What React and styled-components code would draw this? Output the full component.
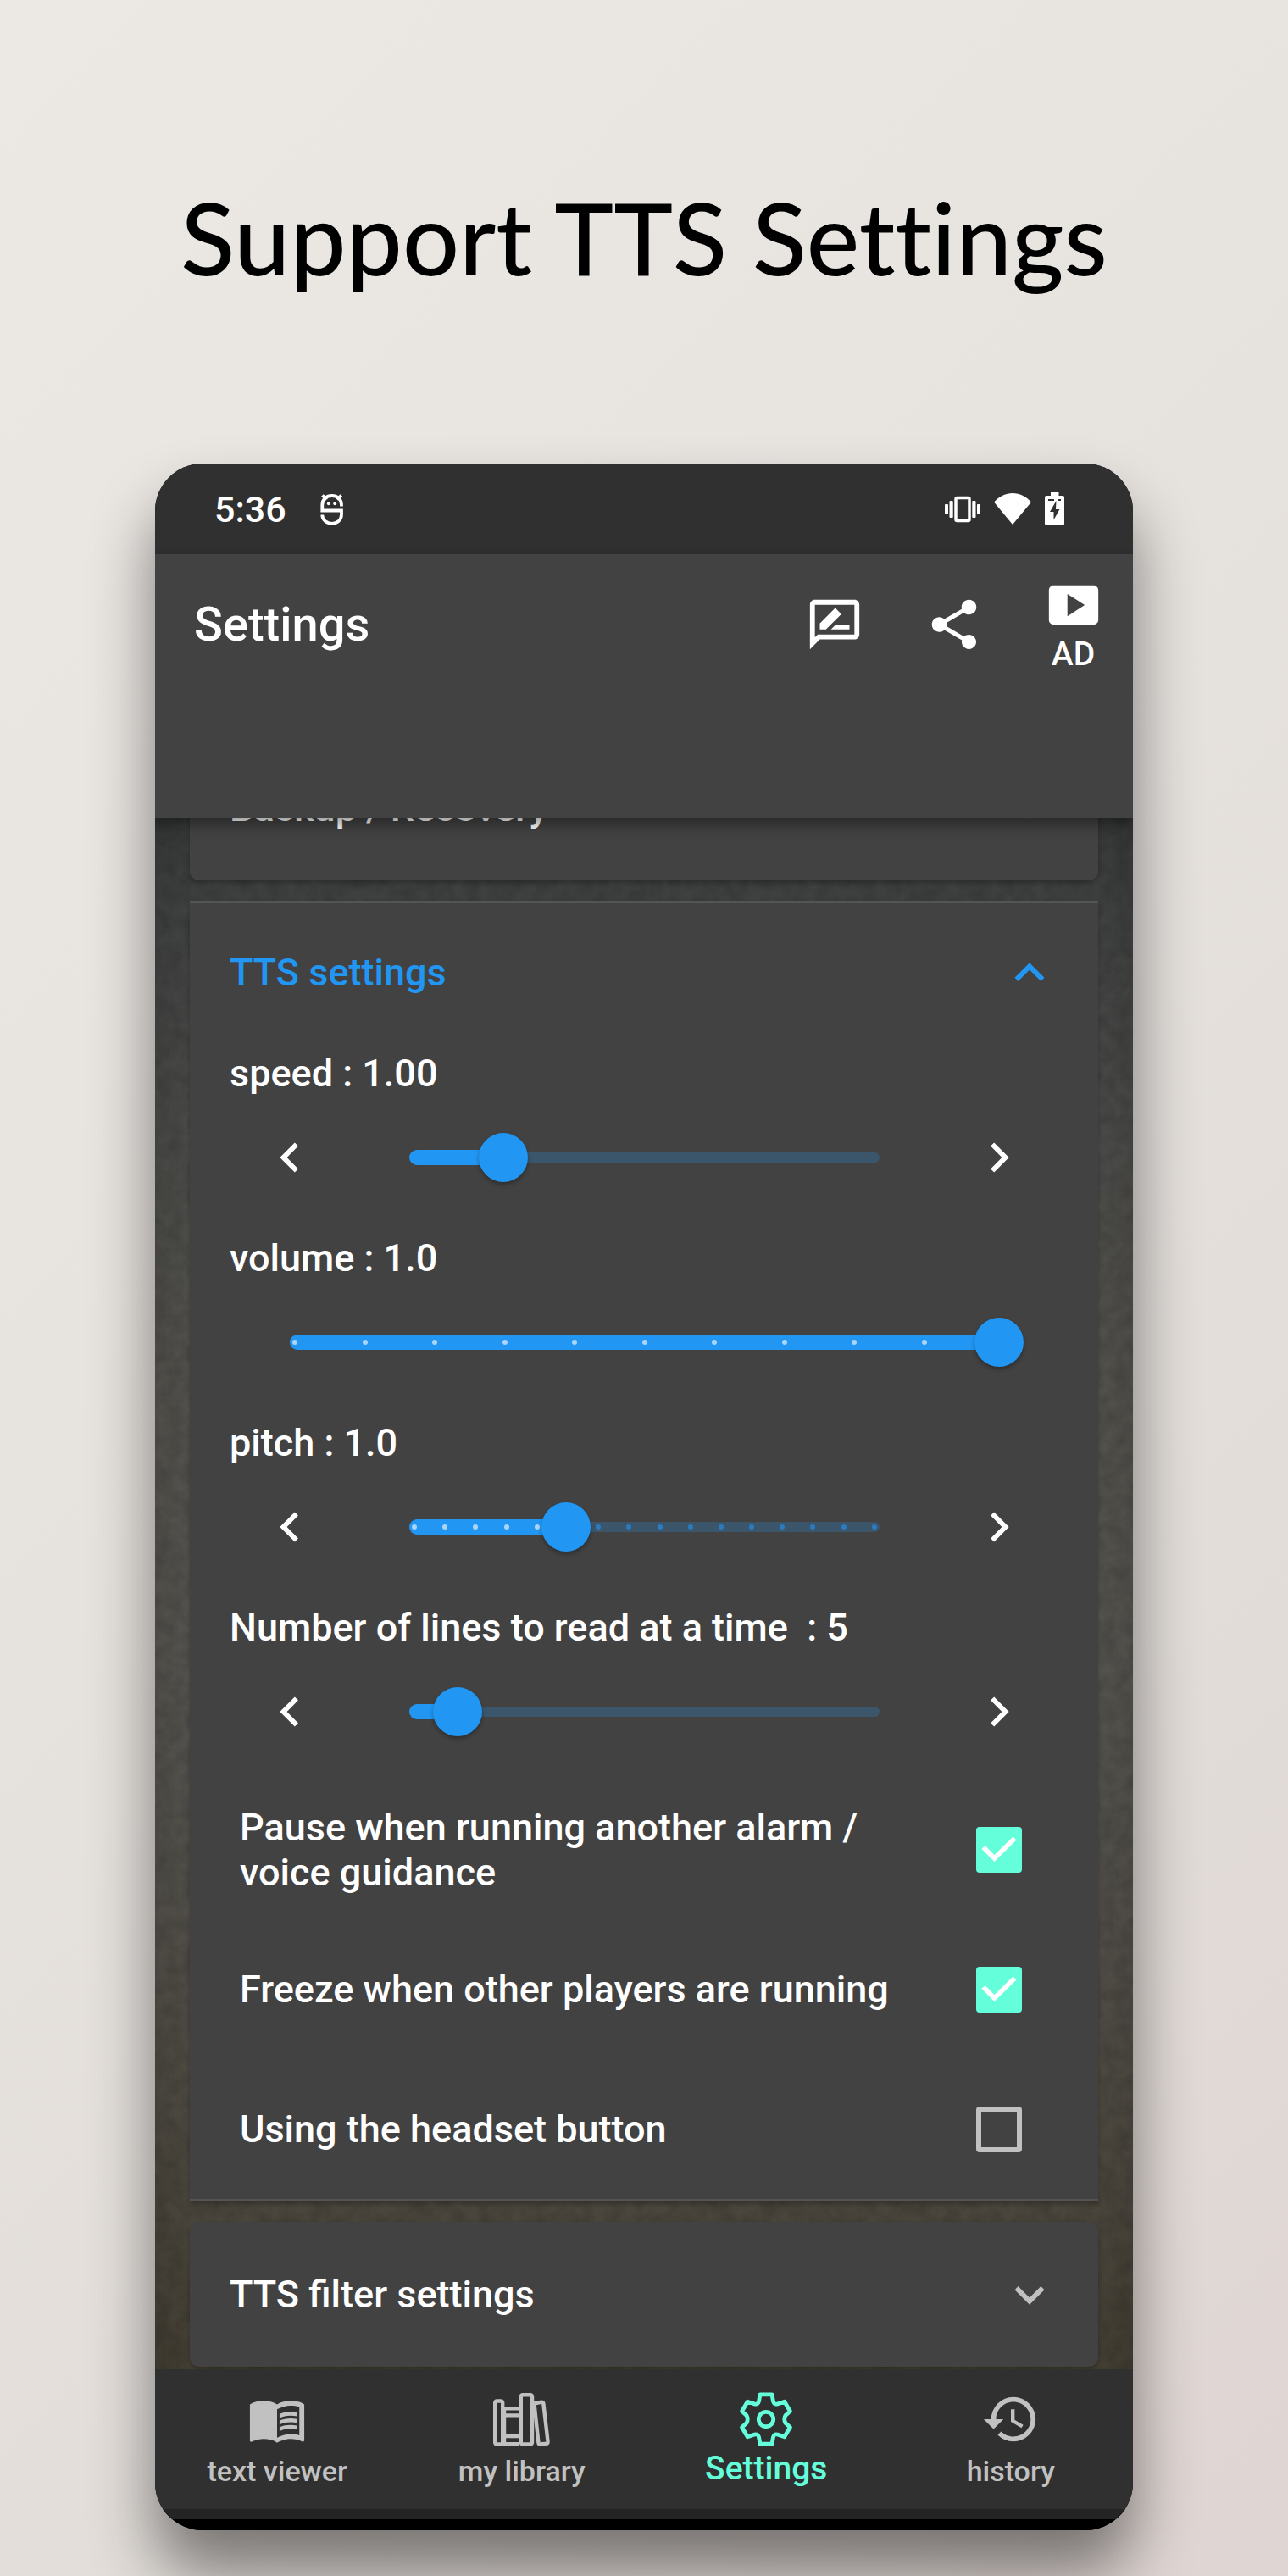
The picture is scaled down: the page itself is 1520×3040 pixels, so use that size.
import React, { useState } from "react";
import styled, { createGlobalStyle, css } from "styled-components";
import {
  MdChevronLeft,
  MdChevronRight,
  MdExpandLess,
  MdExpandMore,
  MdHistory,
  MdMenuBook,
  MdOutlineRateReview,
  MdShare,
} from "react-icons/md";

const color = {
  surface: "#424242",
  bar: "#303030",
  text: "#ffffff",
  muted: "#c1c1c1",
  blue: "#2196f3",
  track: "#3b556b",
  mint: "#64ffda",
};

const GlobalStyle = createGlobalStyle`
  *, *::before, *::after { box-sizing: border-box; }
  body { margin: 0; font-family: Roboto, "Liberation Sans", sans-serif; }
  button { font: inherit; color: inherit; background: none; border: 0; padding: 0; cursor: pointer; }
  a { color: inherit; text-decoration: none; }
  svg { display: block; flex: none; }
`;

const Page = styled.main`
  min-height: 100vh;
  padding: 200px 24px 54px;
  overflow: hidden;
  background: linear-gradient(135deg, #ece9e5 0%, #e7e3df 38%, #e2ddd9 72%, #dfd5d2 100%);
`;

const Title = styled.h1`
  margin: 0 0 187px;
  font-family: Lato, "Open Sans", sans-serif;
  font-size: 118px;
  line-height: 160px;
  font-weight: 500;
  font-variant-ligatures: none;
  text-align: center;
  color: #000;
`;

const Phone = styled.section`
  max-width: 1154px;
  margin: 0 auto;
  border-radius: 56px;
  overflow: hidden;
  background: #000;
  color: ${color.text};
  box-shadow: 0 50px 76px rgba(0, 0, 0, 0.47);
`;

const StatusBar = styled.div`
  display: flex;
  align-items: center;
  gap: 40px;
  height: 107px;
  padding: 0 81px 0 70px;
  background: ${color.bar};
  font-size: 43px;
  line-height: 48px;
  font-weight: 500;
`;

const StatusIcons = styled.div`
  display: flex;
  align-items: center;
  gap: 16px;
  margin-left: auto;
`;

const AppBar = styled.header`
  position: relative;
  z-index: 1;
  padding-bottom: 146px;
  background: ${color.surface};
  box-shadow: 0 8px 16px rgba(0, 0, 0, 0.4);
`;

const Toolbar = styled.div`
  display: flex;
  align-items: center;
  height: 165px;
  padding-left: 46px;
`;

const ScreenTitle = styled.h2`
  flex: 1;
  margin: 0;
  font-size: 56px;
  line-height: 66px;
  font-weight: 500;
`;

const IconButton = styled.button`
  display: flex;
  flex-direction: column;
  align-items: center;
  justify-content: center;
  flex: none;
  width: 141px;
  min-height: 141px;
  font-size: 39px;
  line-height: 46px;
  font-weight: 500;
`;

const Content = styled.div`
  position: relative;
  overflow: hidden;
  background:
    linear-gradient(90deg, rgba(0, 0, 0, 0.08), transparent 4%, transparent 96%, rgba(0, 0, 0, 0.08)),
    linear-gradient(
      180deg,
      #383a3a 0%,
      #404241 6%,
      #4b4b49 20%,
      #53524d 36%,
      #55544f 55%,
      #524f49 72%,
      #4b473e 88%,
      #443f34 100%
    );
`;

const Grain = styled.svg`
  position: absolute;
  inset: 0;
  width: 100%;
  height: 100%;
  opacity: 0.12;
`;

const CardList = styled.div`
  position: relative;
  display: flex;
  flex-direction: column;
  gap: 24px;
  margin-top: -97px;
  padding: 0 41px 3px;
`;

const Card = styled.section`
  border-radius: 11px;
  background: ${color.surface};
  box-shadow: 0 3px 5px rgba(0, 0, 0, 0.25);
  ${(p) =>
    p.$open &&
    css`
      border-radius: 0;
      border-top: 3px solid #535553;
      border-bottom: 3px solid #555453;
    `}
`;

const CardHeader = styled.button`
  display: flex;
  align-items: center;
  justify-content: space-between;
  width: 100%;
  height: ${(p) => (p.$open ? 152 : 171)}px;
  padding: ${(p) => (p.$open ? 11 : 0)}px 46px 0 47px;
  font-size: 45px;
  line-height: 53px;
  font-weight: 500;
  text-align: left;
  color: ${(p) => (p.$open ? color.blue : color.text)};

  svg {
    color: ${(p) => (p.$open ? color.blue : color.muted)};
  }
`;

const CardBody = styled.div`
  padding: 0 47px;
`;

const SettingLabel = styled.label`
  display: block;
  padding: 22px 0 2px;
  font-size: 45px;
  line-height: 53px;
  font-weight: 500;
  white-space: pre-wrap;
`;

const SliderRow = styled.div`
  display: flex;
  align-items: center;
  height: 141px;
`;

const SliderBox = styled.div`
  flex: 1;
  display: grid;
  align-items: center;
  padding: 0 70px 0 71px;

  & > * {
    grid-area: 1 / 1;
  }
`;

const Rail = styled.div`
  height: 12px;
  border-radius: 6px;
  background: ${color.track};
`;

const Fill = styled.div`
  height: 18px;
  border-radius: 9px 0 0 9px;
  background: ${color.blue};
`;

const Ticks = styled.div`
  display: flex;
  justify-content: space-between;
  padding: 0 3px;
`;

const Tick = styled.span`
  width: 6px;
  height: 6px;
  border-radius: 3px;
  background: ${(p) => (p.$on ? "#a9d5fa" : "#2b7bc0")};
`;

const thumb = css`
  width: 58px;
  height: 58px;
  border: 0;
  border-radius: 50%;
  background: ${color.blue};
  box-shadow: 0 3px 5px rgba(0, 0, 0, 0.3);
`;

const Range = styled.input`
  appearance: none;
  width: calc(100% + 58px);
  height: 58px;
  margin: 0 -29px;
  background: transparent;
  cursor: pointer;

  &::-webkit-slider-thumb {
    appearance: none;
    ${thumb}
  }
  &::-moz-range-thumb {
    ${thumb}
  }
`;

const CheckList = styled.div`
  padding-top: 10px;
`;

const CheckRow = styled.label`
  display: flex;
  align-items: center;
  height: 165px;
  padding-left: 12px;
  font-size: 45px;
  line-height: 53px;
  font-weight: 500;
  cursor: pointer;
`;

const CheckText = styled.span`
  flex: 1;
`;

const CheckBox = styled.span`
  display: grid;
  place-items: center;
  width: 140px;

  & > * {
    grid-area: 1 / 1;
  }
  svg {
    pointer-events: none;
  }
`;

const CheckInput = styled.input`
  appearance: none;
  width: 54px;
  height: 54px;
  margin: 0;
  border: 6px solid ${color.muted};
  border-radius: 4px;

  &:checked {
    border-color: ${color.mint};
    background: ${color.mint};
  }
`;

const Nav = styled.nav`
  display: flex;
  height: 165px;
  padding-top: 24px;
  background: ${color.bar};
`;

const NavItem = styled.a`
  flex: 1;
  display: flex;
  flex-direction: column;
  align-items: center;
  color: ${(p) => (p.$active ? color.mint : color.muted)};
`;

const NavIcon = styled.span`
  display: grid;
  place-items: center;
  height: 70px;
`;

const NavLabel = styled.span`
  display: flex;
  align-items: flex-end;
  height: 46px;
  font-size: ${(p) => (p.$active ? 39 : 34)}px;
  line-height: ${(p) => (p.$active ? 46 : 40)}px;
  font-weight: 500;
`;

const GestureArea = styled.div`
  height: 25px;
  border-top: 12px solid #242424;
  background: #000;
`;

const HeadIcon = () => (
  <svg width="28" height="38" viewBox="0 0 28 38" fill="none" stroke="#fff" strokeWidth="3.8" aria-hidden="true">
    <path d="M25 15.5V14C25 7 20 3 13.7 3S2.3 7 2.3 14v6.5H25V25c0 6.500-5 10.800-11.300 10.800S2.300 31.500 2.300 25.500" />
    <path d="M2.500 2.500l5 5M24.800 2.500l-5 5" />
    <circle cx="9.800" cy="12.300" r="1.900" fill="#fff" stroke="none" />
    <circle cx="17.200" cy="12.300" r="1.900" fill="#fff" stroke="none" />
  </svg>
);

const VibrateIcon = () => (
  <svg width="42" height="32" viewBox="0 0 42 32" fill="#fff" aria-hidden="true">
    <rect x="13" y="2.500" width="16" height="27" rx="1.500" fill="none" stroke="#fff" strokeWidth="3.500" />
    <rect x="5.500" y="6" width="4.200" height="20" rx="1" />
    <rect x="32.300" y="6" width="4.200" height="20" rx="1" />
    <rect x="0" y="10" width="4" height="12" rx="1" />
    <rect x="38" y="10" width="4" height="12" rx="1" />
  </svg>
);

const WifiIcon = () => (
  <svg width="44" height="38" viewBox="0 0 44 38" fill="#fff" aria-hidden="true">
    <path d="M0 10.500C6 4 14 0 22 0s16 4 22 10.500L22 37z" />
  </svg>
);

const BatteryIcon = () => (
  <svg width="23" height="39" viewBox="0 0 23 39" aria-hidden="true">
    <path
      fill="#fff"
      d="M7 0h9.500v4H21a2 2 0 0 1 2 2v31a2 2 0 0 1-2 2H2a2 2 0 0 1-2-2V6a2 2 0 0 1 2-2h5z"
    />
    <path fill="#303030" d="M13.500 10L6 23h4.500v9.500L17.500 20H13z" />
    <path stroke="#303030" strokeWidth="2" d="M4 9h7M16 9h3" />
  </svg>
);

const PlayCardIcon = () => (
  <svg width="70" height="70" viewBox="0 0 24 24" fill="currentColor" aria-hidden="true">
    <path d="M20 4H4c-1.100 0-2 .9-2 2v12c0 1.100.9 2 2 2h16c1.100 0 2-.9 2-2V6c0-1.100-.9-2-2-2zM9.500 16.500v-9l7 4.500-7 4.500z" />
  </svg>
);

const LibraryIcon = () => (
  <svg
    width="67"
    height="63"
    viewBox="0 0 67 63"
    fill="none"
    stroke="currentColor"
    strokeWidth="4.400"
    strokeLinejoin="round"
    aria-hidden="true"
  >
    <rect x="2.200" y="9.500" width="9" height="51" rx="2" />
    <path d="M12 18.200h19M12 26.400h19M12 51h19M12 60.300h19" />
    <path d="M13 17v44" />
    <rect x="32.800" y="2.200" width="13.200" height="58.300" rx="2" />
    <path d="M48.500 12.500l8.500-1.800q2 0 2.400 2L64.500 57q.3 2.500-1.800 2.800l-7 .7q-2 .2-2.300-2z" />
  </svg>
);

const GearIcon = () => (
  <svg
    width="62"
    height="64"
    viewBox="-31 -32 62 64"
    fill="none"
    stroke="currentColor"
    strokeWidth="4.800"
    strokeLinejoin="round"
    aria-hidden="true"
  >
    <circle r="8.700" />
    <path d="M-7 -29.200H7L8.500 -21Q9.500 -17 13.500 -18L21.800 -20.800L28.400 -9.500L23 -4.500Q20.500 0 23 4.500L28.400 9.500L21.800 20.800L13.500 18Q9.500 17 8.500 21L7 29.200H-7L-8.500 21Q-9.500 17 -13.500 18L-21.800 20.800L-28.400 9.500L-23 4.500Q-20.500 0 -23 -4.500L-28.400 -9.500L-21.800 -20.800L-13.500 -18Q-9.500 -17 -8.500 -21Z" />
  </svg>
);

const Check = () => (
  <svg width="54" height="54" viewBox="0 0 54 54" fill="none" stroke="#fff" strokeWidth="5.600" aria-hidden="true">
    <path d="M8.500 24l13 13L45.500 13.500" />
  </svg>
);

const sliders = [
  { id: "speed", name: "speed", min: 0, max: 5, step: 0.05, start: 1, digits: 2, arrows: true },
  { id: "volume", name: "volume", min: 0, max: 1, step: 0.1, start: 1, digits: 1, ticks: 10 },
  { id: "pitch", name: "pitch", min: 0.5, max: 2, step: 0.1, start: 1, digits: 1, ticks: 15, arrows: true },
  { id: "lines", name: "Number of lines to read at a time ", min: 1, max: 40, step: 1, start: 5, digits: 0, arrows: true },
];

const options = [
  { id: "pause", text: "Pause when running another alarm / voice guidance", on: true },
  { id: "freeze", text: "Freeze when other players are running", on: true },
  { id: "headset", text: "Using the headset button", on: false },
];

function SliderSetting({ id, name, min, max, step, start, digits, ticks, arrows }) {
  const [value, setValue] = useState(start);
  const part = (value - min) / (max - min);
  const move = (by) => setValue((v) => Math.min(max, Math.max(min, v + by)));

  return (
    <>
      <SettingLabel htmlFor={id}>{`${name} : ${value.toFixed(digits)}`}</SettingLabel>
      <SliderRow>
        {arrows && (
          <IconButton type="button" aria-label={`Decrease ${name}`} onClick={() => move(-step)}>
            <MdChevronLeft size={70} />
          </IconButton>
        )}
        <SliderBox>
          <Rail />
          <Fill style={{ width: `${part * 100}%` }} />
          {ticks && (
            <Ticks>
              {Array.from({ length: ticks + 1 }, (_, i) => (
                <Tick key={i} $on={i / ticks <= part} />
              ))}
            </Ticks>
          )}
          <Range
            id={id}
            type="range"
            min={min}
            max={max}
            step={step}
            value={value}
            onChange={(e) => setValue(Number(e.target.value))}
          />
        </SliderBox>
        {arrows && (
          <IconButton type="button" aria-label={`Increase ${name}`} onClick={() => move(step)}>
            <MdChevronRight size={70} />
          </IconButton>
        )}
      </SliderRow>
    </>
  );
}

function CheckSetting({ id, text, on }) {
  const [checked, setChecked] = useState(on);
  return (
    <CheckRow htmlFor={id}>
      <CheckText>{text}</CheckText>
      <CheckBox>
        <CheckInput id={id} type="checkbox" checked={checked} onChange={(e) => setChecked(e.target.checked)} />
        {checked && <Check />}
      </CheckBox>
    </CheckRow>
  );
}

function ClosedCard({ title }) {
  return (
    <Card>
      <CardHeader type="button" aria-expanded="false">
        {title}
        <MdExpandMore size={70} />
      </CardHeader>
    </Card>
  );
}

const tabs = [
  { label: "text viewer", icon: <MdMenuBook size={70} /> },
  { label: "my library", icon: <LibraryIcon /> },
  { label: "Settings", icon: <GearIcon />, active: true },
  { label: "history", icon: <MdHistory size={70} /> },
];

export default function App() {
  return (
    <>
      <GlobalStyle />
      <Page>
        <Title>Support TTS Settings</Title>
        <Phone>
          <StatusBar>
            <span>5:36</span>
            <HeadIcon />
            <StatusIcons>
              <VibrateIcon />
              <WifiIcon />
              <BatteryIcon />
            </StatusIcons>
          </StatusBar>

          <AppBar>
            <Toolbar>
              <ScreenTitle>Settings</ScreenTitle>
              <IconButton type="button" aria-label="Review">
                <MdOutlineRateReview size={70} />
              </IconButton>
              <IconButton type="button" aria-label="Share">
                <MdShare size={70} />
              </IconButton>
              <IconButton type="button">
                <PlayCardIcon />
                AD
              </IconButton>
            </Toolbar>
          </AppBar>

          <Content>
            <Grain aria-hidden="true">
              <filter id="grain">
                <feTurbulence type="fractalNoise" baseFrequency="0.06" numOctaves="4" seed="4" />
                <feColorMatrix values="0 0 0 0 0  0 0 0 0 0  0 0 0 0 0  1.800 0 0 0 -0.500" />
              </filter>
              <rect width="100%" height="100%" filter="url(#grain)" />
            </Grain>
            <CardList>
              <ClosedCard title="Backup / Recovery" />
              <Card $open>
                <CardHeader type="button" aria-expanded="true" $open>
                  TTS settings
                  <MdExpandLess size={70} />
                </CardHeader>
                <CardBody>
                  {sliders.map((s) => (
                    <SliderSetting key={s.id} {...s} />
                  ))}
                  <CheckList>
                    {options.map((o) => (
                      <CheckSetting key={o.id} {...o} />
                    ))}
                  </CheckList>
                </CardBody>
              </Card>
              <ClosedCard title="TTS filter settings" />
            </CardList>
          </Content>

          <Nav>
            {tabs.map((t) => (
              <NavItem key={t.label} href="#" $active={t.active} aria-current={t.active ? "page" : undefined}>
                <NavIcon>{t.icon}</NavIcon>
                <NavLabel $active={t.active}>{t.label}</NavLabel>
              </NavItem>
            ))}
          </Nav>
          <GestureArea />
        </Phone>
      </Page>
    </>
  );
}
